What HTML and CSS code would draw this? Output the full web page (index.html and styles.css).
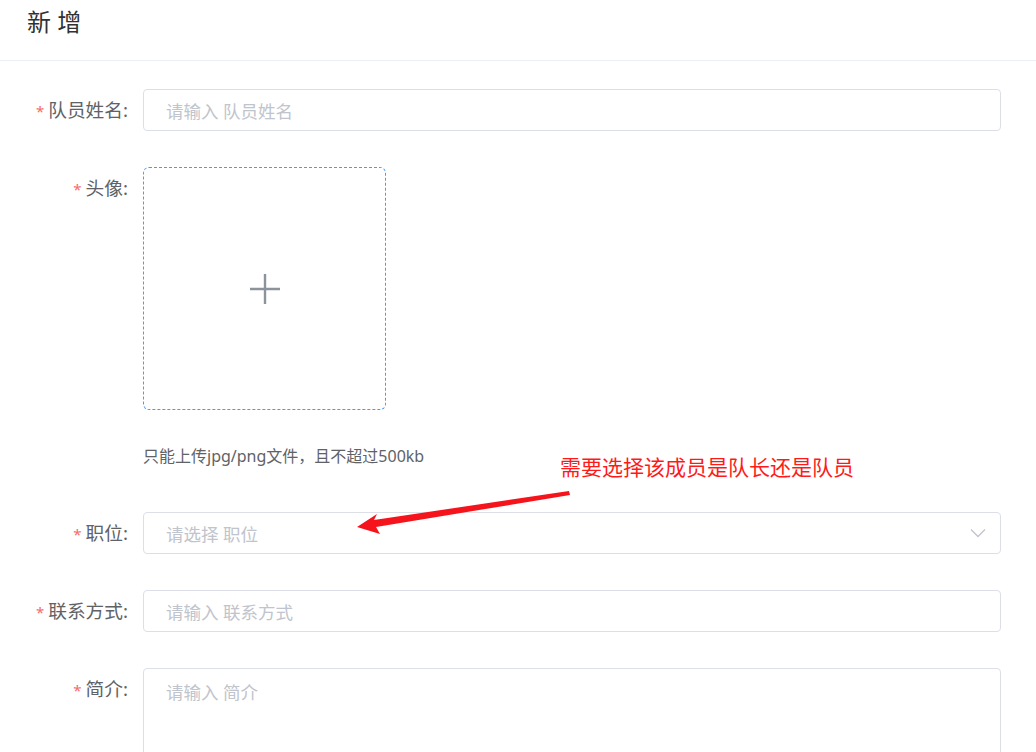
FILE: index.html
```html
<!DOCTYPE html>
<html lang="zh">
<head>
<meta charset="utf-8">
<title>新增</title>
<link rel="stylesheet" href="styles.css">
</head>
<body>
<div class="header"><h2 class="title">新 增</h2></div>
<form class="form">
  <div class="item">
    <label class="label"><span class="req">*</span>队员姓名:</label>
    <div class="control"><div class="input"><span class="ph">请输入 队员姓名</span></div></div>
  </div>
  <div class="item item-upload">
    <label class="label"><span class="req">*</span>头像:</label>
    <div class="control">
      <div class="upload">
        <svg class="plus" width="32" height="32" viewBox="0 0 32 32"><path d="M16 1v30M1 16h30" stroke="#8c939d" stroke-width="2.4" fill="none"/></svg>
      </div>
      <div class="tip">只能上传jpg/png文件，且不超过500kb</div>
    </div>
  </div>
  <div class="item">
    <label class="label"><span class="req">*</span>职位:</label>
    <div class="control"><div class="input select"><span class="ph">请选择 职位</span>
      <svg class="chev" width="16" height="10" viewBox="0 0 16 10"><path d="M1 1.5l7 7 7-7" stroke="#c0c4cc" stroke-width="1.3" fill="none"/></svg>
    </div></div>
  </div>
  <div class="item">
    <label class="label"><span class="req">*</span>联系方式:</label>
    <div class="control"><div class="input"><span class="ph">请输入 联系方式</span></div></div>
  </div>
  <div class="item item-area">
    <label class="label"><span class="req">*</span>简介:</label>
    <div class="control"><div class="textarea"><span class="ph">请输入 简介</span></div></div>
  </div>
</form>
<div class="note">需要选择该成员是队长还是队员</div>
<svg class="arrow" width="1036" height="752" viewBox="0 0 1036 752">
  <path d="M569 491 L374 520 L377 514 L357 527 L380 534 L376 527 L570 495 Z" fill="#f5141b"/>
</svg>
</body>
</html>
```
FILE: styles.css
```css
html, body {
  margin: 0;
  padding: 0;
  background: #fff;
  font-family: "Noto Sans", "Noto Sans CJK SC", sans-serif;
  overflow: hidden;
  height: 752px;
}
.header {
  height: 60px;
  border-bottom: 1px solid #ebeef5;
  box-sizing: content-box;
}
.title {
  margin: 0;
  padding: 6px 27px 0;
  font-size: 24px;
  line-height: 32px;
  font-weight: normal;
  color: #303133;
}
.form {
  padding: 28px 35px 0 0;
  margin: 0;
}
.item {
  display: flex;
  margin-bottom: 36px;
}
.label {
  display: block;
  width: 143px;
  height: 42px;
  flex: none;
  box-sizing: border-box;
  padding-right: 15px;
  text-align: right;
  font-size: 18.7px;
  line-height: 42px;
  color: #606266;
}
.req {
  color: #f56c6c;
  margin-right: 4px;
  font-size: 15px;
  line-height: 0;
}
.control {
  flex: 1;
  min-width: 0;
}
.input, .textarea {
  height: 42px;
  box-sizing: border-box;
  border: 1px solid #dcdfe6;
  border-radius: 4px;
  padding: 0 22px;
  display: flex;
  align-items: center;
}
.ph {
  font-size: 17.5px;
  color: #c0c4cc;
}
.select {
  justify-content: space-between;
  padding-right: 14px;
}
.chev {
  display: block;
}
.upload {
  width: 243px;
  height: 243px;
  box-sizing: border-box;
  border: 1px dashed #409eff;
  border-radius: 6px;
  display: flex;
  align-items: center;
  justify-content: center;
}
.tip {
  margin-top: 36px;
  font-size: 16px;
  line-height: 20px;
  color: #606266;
}
.item-upload {
  margin-bottom: 46px;
}
.textarea {
  height: 130px;
  align-items: flex-start;
  padding-top: 10px;
  border-bottom-left-radius: 0;
  border-bottom-right-radius: 0;
}
.note {
  position: absolute;
  left: 560px;
  top: 452px;
  font-size: 21px;
  line-height: 28px;
  color: #ff1a1a;
  font-family: "Noto Sans CJK SC", sans-serif;
  white-space: nowrap;
}
.arrow {
  position: absolute;
  left: 0;
  top: 0;
  pointer-events: none;
}
```
